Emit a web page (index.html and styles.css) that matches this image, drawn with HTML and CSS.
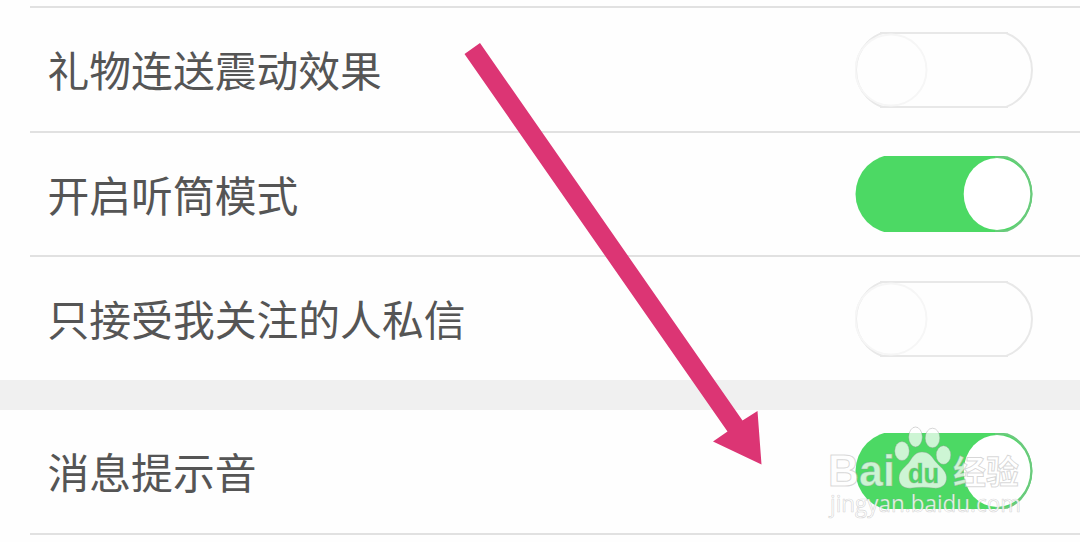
FILE: index.html
```
<!DOCTYPE html>
<html lang="zh-CN">
<head>
<meta charset="UTF-8">
<meta name="viewport" content="width=device-width, initial-scale=1.0">
<title>消息设置</title>
<link rel="stylesheet" href="styles.css">
</head>
<body>
    <div class="settings">
        <div class="group">
            <div class="row">
                <span class="label">礼物连送震动效果</span>
                <svg class="switch off" viewBox="0 0 178 76">
                    <rect class="track" x="1" y="-1" width="176" height="78" rx="39"/>
                    <path class="edge" d="M25 1H153M25 75H153"/>
                    <circle class="knob" cx="36" cy="38" r="35.5"/>
                </svg>
            </div>
            <div class="row">
                <span class="label">开启听筒模式</span>
                <svg class="switch on" viewBox="0 0 178 76">
                    <rect class="track" x="0.5" y="-1.5" width="177" height="79" rx="39.5"/>
                    <path class="rim" d="M140 1.2H152C168 7 176.300 23 176.300 38S168 69 152 74.8H140"/>
                    <ellipse class="knob" cx="142" cy="38" rx="33.300" ry="36"/>
                </svg>
            </div>
            <div class="row">
                <span class="label">只接受我关注的人私信</span>
                <svg class="switch off" viewBox="0 0 178 76">
                    <rect class="track" x="1" y="-1" width="176" height="78" rx="39"/>
                    <path class="edge" d="M25 1H153M25 75H153"/>
                    <circle class="knob" cx="36" cy="38" r="35.5"/>
                </svg>
            </div>
        </div>
        <div class="group">
            <div class="row last">
                <span class="label">消息提示音</span>
                <svg class="switch on" viewBox="0 0 178 76">
                    <rect class="track" x="0.5" y="-1.5" width="177" height="79" rx="39.5"/>
                    <path class="rim" d="M140 1.2H152C168 7 176.300 23 176.300 38S168 69 152 74.8H140"/>
                    <ellipse class="knob" cx="142" cy="38" rx="33.300" ry="36"/>
                </svg>
            </div>
        </div>
    </div>

    <!-- arrow pointing at the last switch -->
    <svg class="arrow" viewBox="0 0 1080 542">
        <path d="M464.5 54L480 43L742.5 420.5L757.5 411L761.5 464.5L713 441.5L727.5 431.5Z"/>
    </svg>

    <svg class="watermark" viewBox="0 0 210 100">
        <text class="brand" x="6" y="66" textLength="67" lengthAdjust="spacingAndGlyphs">Bai</text>
        <g class="paw">
            <ellipse cx="80" cy="31" rx="7.300" ry="9.500"/>
            <ellipse cx="93.500" cy="17" rx="6.800" ry="10"/>
            <ellipse cx="110.500" cy="18" rx="7.300" ry="9.800"/>
            <ellipse cx="121.500" cy="35" rx="7.300" ry="9.300"/>
            <path d="M100 32C94 32 91 36 88 41C84 47 77 50 77 58C77 66 83 69 90 68C97 67 104 67 111 68C119 69 125 65 124.500 57C124 50 117 46 113 41C109 35 106 32 100 32Z"/>
        </g>
        <text class="du" x="86" y="62.500" textLength="31" lengthAdjust="spacingAndGlyphs">du</text>
        <text class="jingyan" x="131" y="64" textLength="66" lengthAdjust="spacingAndGlyphs">经验</text>
        <text class="site" x="8" y="92" textLength="191" lengthAdjust="spacingAndGlyphs">jingyan.baidu.com</text>
    </svg>
</body>
</html>
```
FILE: styles.css
```
body {
    margin: 0;
    height: 542px;
    overflow: hidden;
    position: relative;
    background-color: #fefefe;
    font-family: "Noto Sans CJK SC", sans-serif;
}

.settings {
    padding-top: 6.4px;
}

.group + .group {
    border-top: 30px solid #f0f0f0;
}

.row {
    display: flex;
    align-items: center;
    justify-content: space-between;
    box-sizing: border-box;
    height: 124.5px;
    margin-left: 30px;
    padding: 0 47.5px 0 17.5px;
    border-top: 2px solid #e1e1e1;
}

.row.last {
    height: 125px;
    border-top: none;
    border-bottom: 2px solid #e1e1e1;
}

.label {
    padding-bottom: 1px;
    font-size: 41.8px;
    line-height: 60px;
    color: #555;
}

.switch {
    width: 178px;
    height: 76px;
    overflow: hidden;
}

.off .track {
    fill: #fefefe;
    stroke: #e8e8e8;
    stroke-width: 2;
}

.off .edge {
    stroke: #e8e8e8;
    stroke-width: 2;
}

.off .knob {
    fill: none;
    stroke: #f6f6f6;
    stroke-width: 2;
}

.on .track {
    fill: #4cd964;
}

.on .rim {
    fill: none;
    stroke: #6bc97d;
    stroke-width: 2;
}

.on .knob {
    fill: #fff;
}

.arrow {
    position: absolute;
    left: 0;
    top: 0;
    width: 1080px;
    height: 542px;
    fill: #dc3574;
}

.watermark {
    position: absolute;
    left: 822px;
    top: 420px;
    width: 210px;
    height: 100px;
    fill: rgba(255, 255, 255, 0.72);
    stroke: rgba(150, 150, 150, 0.38);
    stroke-width: 1;
}

.brand {
    font: bold 44px "Liberation Sans", sans-serif;
}

.du {
    font: bold 28px "Liberation Sans", sans-serif;
    fill: #4cd964;
}

.jingyan {
    font: bold 33px "Noto Sans CJK SC", sans-serif;
}

.site {
    font: 500 23px "Open Sans", "Noto Sans", sans-serif;
    fill: rgba(255, 255, 255, 0.85);
    stroke-width: 0.7;
}
```
